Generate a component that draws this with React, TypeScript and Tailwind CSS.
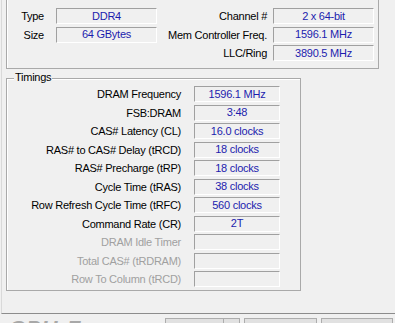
import React from 'react';

const generalLeft = [
  { label: 'Type', value: 'DDR4' },
  { label: 'Size', value: '64 GBytes' },
];

const generalRight = [
  { label: 'Channel #', value: '2 x 64-bit' },
  { label: 'Mem Controller Freq.', value: '1596.1 MHz' },
  { label: 'LLC/Ring', value: '3890.5 MHz' },
];

const timings = [
  { label: 'DRAM Frequency', value: '1596.1 MHz' },
  { label: 'FSB:DRAM', value: '3:48' },
  { label: 'CAS# Latency (CL)', value: '16.0 clocks' },
  { label: 'RAS# to CAS# Delay (tRCD)', value: '18 clocks' },
  { label: 'RAS# Precharge (tRP)', value: '18 clocks' },
  { label: 'Cycle Time (tRAS)', value: '38 clocks' },
  { label: 'Row Refresh Cycle Time (tRFC)', value: '560 clocks' },
  { label: 'Command Rate (CR)', value: '2T' },
  { label: 'DRAM Idle Timer', value: '', disabled: true },
  { label: 'Total CAS# (tRDRAM)', value: '', disabled: true },
  { label: 'Row To Column (tRCD)', value: '', disabled: true },
];

const fieldBase =
  'h-[16px] flex items-center justify-center border-t border-l border-b border-r border-t-[#a0a0a0] border-l-[#a0a0a0] border-b-white border-r-white text-[#1c1cae] leading-none';

function Field({ value, wide }: { value: string; wide?: boolean }) {
  return <div className={`${fieldBase} ${wide ? 'w-[101px]' : 'w-[86px]'}`}>{value}</div>;
}

export default function App() {
  return (
    <div
      className="w-[395px] h-[323px] overflow-hidden bg-[#f0f0f0] text-[11px] text-black tracking-[-0.25px]"
      style={{ fontFamily: '"Liberation Sans", Arial, sans-serif' }}
    >
      {/* Tab page */}
      <div className="ml-[1px] h-[314px] flex flex-col items-start border-l border-b border-l-[#d9d9d9] border-b-[#8c8c8c] pl-[4px]">
        {/* General */}
        <div className="relative -mt-[4px] w-[373px] h-[73px] shrink-0 border border-[#a9a9a9] shadow-[inset_1px_1px_0_white] pt-[11px]">
          <span className="absolute -top-[8px] left-[8px] px-[1px] bg-[#f0f0f0] leading-none">General</span>
          <div className="flex">
            <div className="flex flex-col gap-[2px]">
              {generalLeft.map((r) => (
                <div key={r.label} className="flex items-center">
                  <span className="w-[37px] text-right">{r.label}</span>
                  <div className="ml-[12px]">
                    <Field value={r.value} wide />
                  </div>
                </div>
              ))}
            </div>
            <div className="flex flex-col gap-[2px]">
              {generalRight.map((r) => (
                <div key={r.label} className="flex items-center">
                  <span className="w-[110px] text-right whitespace-nowrap">{r.label}</span>
                  <div className="ml-[6px]">
                    <Field value={r.value} wide />
                  </div>
                </div>
              ))}
            </div>
          </div>
        </div>

        {/* Timings */}
        <div className="relative mt-[9px] w-[295px] h-[213px] shrink-0 border border-[#a9a9a9] shadow-[inset_1px_1px_0_white] pt-[7px]">
          <span className="absolute -top-[7px] left-[7px] px-[1px] bg-[#f0f0f0] leading-none">Timings</span>
          <div className="flex flex-col gap-[2px]">
            {timings.map((r) => (
              <div key={r.label} className="flex items-center">
                <span className={`w-[174px] text-right whitespace-nowrap ${r.disabled ? 'text-[#a0a0a0]' : ''}`}>
                  {r.label}
                </span>
                <div className="ml-[13px]">
                  <Field value={r.value} />
                </div>
              </div>
            ))}
          </div>
        </div>
      </div>

      {/* Footer */}
      <div className="flex items-start h-[9px]">
        <span className="ml-[9px] mt-[4px] text-[22px] font-bold italic text-[#a8a8a8] leading-none tracking-[1px]">
          CPU-Z
        </span>
        <div className="ml-auto mt-[4px] flex gap-[4px] pr-[2px]">
          <div className="flex w-[75px] h-[22px] border border-[#adadad] bg-[#e1e1e1]">
            <span className="flex-1 text-center pt-[4px]">Tools</span>
            <span className="w-[16px] border-l border-[#adadad] text-center text-[8px] pt-[5px]">▼</span>
          </div>
          <div className="w-[73px] h-[22px] border border-[#adadad] bg-[#e1e1e1] text-center pt-[4px]">Validate</div>
          <div className="w-[72px] h-[22px] border border-[#adadad] bg-[#e1e1e1] text-center pt-[4px]">Close</div>
        </div>
      </div>
    </div>
  );
}
